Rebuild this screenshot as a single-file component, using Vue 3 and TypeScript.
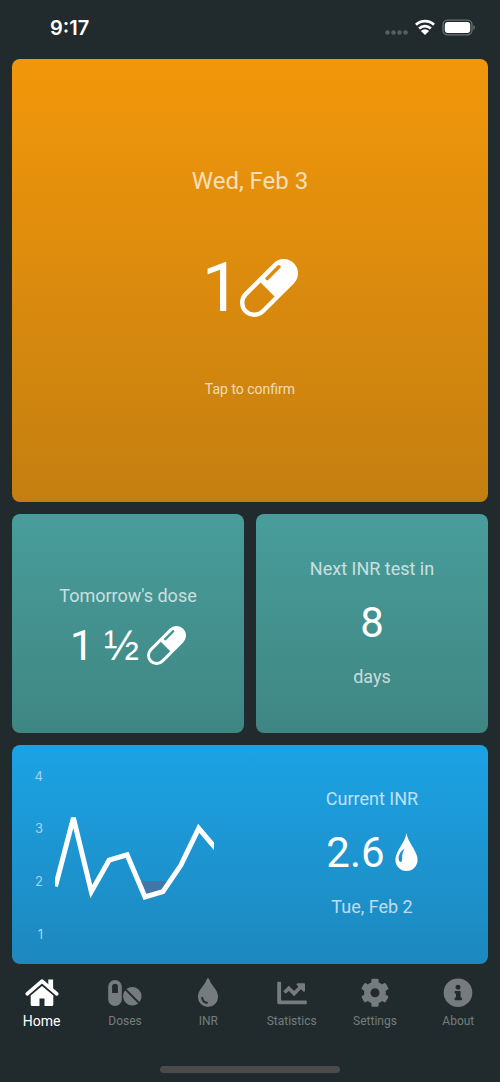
<script setup lang="ts">
import { computed, ref } from 'vue'

type TabId = 'home' | 'doses' | 'inr' | 'statistics' | 'settings' | 'about'

const tabs: { id: TabId; label: string }[] = [
  { id: 'home', label: 'Home' },
  { id: 'doses', label: 'Doses' },
  { id: 'inr', label: 'INR' },
  { id: 'statistics', label: 'Statistics' },
  { id: 'settings', label: 'Settings' },
  { id: 'about', label: 'About' },
]
const active = ref<TabId>('home')

const readings = [1.9, 3.2, 1.8, 2.4, 2.5, 1.7, 1.8, 2.3, 3.0, 2.6]
const levels = [4, 3, 2, 1]
const toX = (i: number) => 43.5 + i * 17.9
const toY = (v: number) => 241.5 - v * 52.7
const line = computed(() => readings.map((v, i) => `${toX(i)},${toY(v)}`).join(' '))
const area = computed(
  () => `${line.value} ${toX(readings.length - 1)},${toY(2)} ${toX(0)},${toY(2)}`,
)
</script>

<template>
  <div class="screen">
    <svg class="defs" aria-hidden="true">
      <symbol id="pill" viewBox="0 0 58 58">
        <g transform="translate(29 29) rotate(-45)">
          <path
            fill="currentColor"
            fill-rule="evenodd"
            d="M-20.8-14.3H20.8a14.3 14.3 0 0 1 0 28.6H-20.8a14.3 14.3 0 0 1 0-28.6ZM-20.8-9.9a9.9 9.9 0 0 0 0 19.8H-2V-9.9ZM5.5-9.8a1.8 1.8 0 0 0 0 3.6H22a1.8 1.8 0 0 0 0-3.6Z"
          />
        </g>
      </symbol>
    </svg>

    <header class="status">
      <time class="clock">9:17</time>
      <svg class="signals" width="90" height="20" viewBox="0 0 90 20" aria-hidden="true">
        <g fill="#565e60">
          <circle cx="2.5" cy="14.5" r="2.3" /><circle cx="8.5" cy="14.5" r="2.3" />
          <circle cx="14.5" cy="14.5" r="2.3" /><circle cx="20.5" cy="14.5" r="2.3" />
        </g>
        <g fill="none" stroke="#fff" stroke-width="2.8">
          <path d="M31 6.7a13 13 0 0 1 18 0" />
          <path d="M34.2 10.4a8.4 8.4 0 0 1 11.6 0" />
        </g>
        <path d="M35.9 12.9a5.8 5.8 0 0 1 8.2 0L40 17Z" fill="#fff" />
        <rect x="58" y="2.2" width="29" height="14.6" rx="4.5" fill="none" stroke="#697173" stroke-width="1.3" />
        <rect x="59.8" y="4" width="25.4" height="11" rx="3" fill="#fff" />
        <path d="M88.4 7q1.6.7 1.6 2.5t-1.6 2.5Z" fill="#697173" />
      </svg>
    </header>

    <main class="cards">
      <button class="card today" type="button">
        <span class="date">Wed, Feb 3</span>
        <span class="amount huge">1<svg class="pill-large" aria-hidden="true"><use href="#pill" /></svg></span>
        <span class="hint">Tap to confirm</span>
      </button>

      <button class="card teal short" type="button">
        <span class="caption">Tomorrow's dose</span>
        <span class="amount"><span>1 <span class="fraction">½</span></span><svg class="pill-small" aria-hidden="true"><use href="#pill" /></svg></span>
      </button>

      <button class="card teal" type="button">
        <span class="caption">Next INR test in</span>
        <span class="amount">8</span>
        <span class="caption">days</span>
      </button>

      <button class="card inr" type="button">
        <svg class="chart" viewBox="0 0 232 219" role="img" aria-label="INR history">
          <clipPath id="plot"><rect x="43" y="0" width="159" height="219" /></clipPath>
          <clipPath id="low"><rect x="43" :y="toY(2)" width="159" height="100" /></clipPath>
          <text v-for="n in levels" :key="n" x="31" :y="toY(n) + 5" text-anchor="end">{{ n }}</text>
          <polygon :points="area" fill="#4177a8" clip-path="url(#low)" />
          <polyline :points="line" fill="none" stroke="#fff" stroke-width="5" clip-path="url(#plot)" />
        </svg>
        <span class="current">
          <span class="caption">Current INR</span>
          <span class="amount reading">2.6
            <svg class="drop" viewBox="0 0 23 38" aria-hidden="true">
              <path
                fill="currentColor"
                fill-rule="evenodd"
                d="M11.5 0C12.3 9 22.6 18 22.6 26.8A11.1 11.1 0 0 1 .4 26.8C.4 18 10.7 9 11.5 0ZM9.6 15.4C6 17.6 3.6 21.5 3.6 25.3 3.6 27.3 4.4 29 5.7 29 7.8 29 6.8 25 7.4 21.6 7.8 19.2 8.6 17.4 9.6 15.4Z"
              />
            </svg>
          </span>
          <span class="caption">Tue, Feb 2</span>
        </span>
      </button>
    </main>

    <nav class="tabs" aria-label="Main">
      <button
        v-for="tab in tabs"
        :key="tab.id"
        type="button"
        class="tab"
        :class="{ active: active === tab.id }"
        :aria-current="active === tab.id ? 'page' : undefined"
        @click="active = tab.id"
      >
        <svg class="icon" viewBox="0 0 36 30" fill="currentColor" aria-hidden="true">
          <template v-if="tab.id === 'home'">
            <path d="M3.2 15.8 18 3.2 32.8 15.8" fill="none" stroke="currentColor" stroke-width="3.6" stroke-linecap="round" stroke-linejoin="round" />
            <path d="M24.3 1.4h4.8v11l-4.8-4Z" />
            <path d="M18 7.9 29.3 17.4V26.5a1.5 1.5 0 0 1-1.5 1.5H20.5V20.5H15.5V28H8.2A1.5 1.5 0 0 1 6.7 26.5V17.4Z" />
          </template>
          <template v-else-if="tab.id === 'doses'">
            <path fill-rule="evenodd" d="M8 2a6.8 6.8 0 0 1 6.8 6.8v12.4a6.8 6.8 0 0 1-13.6 0V8.800A6.8 6.8 0 0 1 8 2ZM8 5.8a2.9 2.9 0 0 0-2.9 2.9V15h5.8V8.7A2.9 2.9 0 0 0 8 5.8Z" />
            <path d="M19.4 11.02A9.3 9.3 0 0 1 32.48 24.1ZM18.12 12.3A9.3 9.3 0 0 0 31.2 25.38Z" />
          </template>
          <path
            v-else-if="tab.id === 'inr'"
            fill-rule="evenodd"
            d="M18 .2c.6 0 1 .3 1.2.9 2 7 8.9 10.6 8.9 17.7a10.1 10.1 0 0 1-20.2 0c0-7.1 6.9-10.7 8.9-17.7.2-.6.6-.9 1.2-.9ZM12.3 18.7a1 1 0 0 0-1 1c0 3.3 2.6 6 5.9 6a1 1 0 0 0 0-1.9c-2.2 0-4-1.9-4-4.1a1 1 0 0 0-.9-1Z"
          />
          <template v-else-if="tab.id === 'statistics'">
            <path d="M4.2 3.8h1.9a1 1 0 0 1 1 1v17.6h24.7a1 1 0 0 1 1 1v1.9a1 1 0 0 1-1 1H5a1.8 1.8 0 0 1-1.8-1.8V4.8a1 1 0 0 1 1-1Z" />
            <path d="m10.5 14.5 4.3-4.2 5.3 5.3 7-7" fill="none" stroke="currentColor" stroke-width="3.6" />
            <path d="M23.5 5.3h6.5a1 1 0 0 1 1 1V12.8c0 .9-1 1.3-1.7.7L22.8 7c-.6-.6-.2-1.7.7-1.7Z" />
          </template>
          <g v-else-if="tab.id === 'settings'" transform="translate(3.5 .2) scale(.0566)">
            <path d="M487.4 315.7l-42.6-24.6c4.3-23.2 4.3-47 0-70.2l42.6-24.6c4.9-2.8 7.1-8.6 5.5-14-11.1-35.6-30-67.8-54.7-94.6-3.8-4.1-10-5.1-14.8-2.3L380.8 110c-17.9-15.4-38.5-27.3-60.8-35.1V25.8c0-5.6-3.9-10.5-9.4-11.7-36.7-8.2-74.3-7.8-109.2 0-5.5 1.2-9.4 6.1-9.4 11.7V75c-22.2 7.9-42.8 19.8-60.8 35.1L88.7 85.5c-4.9-2.8-11-1.9-14.8 2.3-24.7 26.7-43.6 58.9-54.7 94.6-1.7 5.4.6 11.2 5.5 14L67.3 221c-4.3 23.2-4.3 47 0 70.2l-42.6 24.6c-4.9 2.8-7.1 8.6-5.5 14 11.1 35.6 30 67.8 54.7 94.6 3.8 4.1 10 5.1 14.8 2.3l42.6-24.6c17.9 15.4 38.5 27.3 60.8 35.1v49.2c0 5.6 3.9 10.5 9.4 11.7 36.7 8.2 74.3 7.8 109.2 0 5.5-1.2 9.4-6.1 9.4-11.7v-49.2c22.2-7.9 42.8-19.8 60.8-35.1l42.6 24.6c4.9 2.8 11 1.9 14.8-2.3 24.7-26.7 43.6-58.9 54.7-94.6 1.5-5.5-.7-11.3-5.6-14.1zM256 336c-44.1 0-80-35.9-80-80s35.9-80 80-80 80 35.9 80 80-35.9 80-80 80z" />
          </g>
          <path
            v-else
            fill-rule="evenodd"
            d="M18 .4a14.3 14.3 0 1 0 0 28.6 14.3 14.3 0 0 0 0-28.6ZM18 6.7a2.5 2.5 0 1 1 0 5 2.5 2.5 0 0 1 0-5ZM15.4 13h4.5q.7 0 .7.7v5.9h.7q.7 0 .7.7v1.3q0 .7-.7.7h-6q-.7 0-.7-.7v-1.3q0-.7.7-.7h.7v-3.9h-.7q-.7 0-.7-.7V13.7q0-.7.7-.7Z"
          />
        </svg>
        <span>{{ tab.label }}</span>
      </button>
    </nav>
    <div class="home-bar"></div>
  </div>
</template>

<style>
body {
  background: #212b2d;
}
</style>

<style scoped>
.screen {
  box-sizing: border-box;
  display: flex;
  flex-direction: column;
  min-height: 100vh;
  background: #212b2d;
  color: #fff;
  font-family: Roboto, sans-serif;
}
.defs {
  display: none;
}
.status {
  box-sizing: border-box;
  display: flex;
  align-items: center;
  justify-content: space-between;
  height: 59px;
  padding: 0 25px 4px 50px;
}
.clock {
  font: 600 20px/24px Inter, sans-serif;
}
.cards {
  flex: 1;
  display: grid;
  grid-template-columns: 1fr 1fr;
  grid-template-rows: 443fr 219fr 219fr;
  gap: 12px;
  padding: 0 12px;
}
.card {
  display: flex;
  flex-direction: column;
  align-items: center;
  justify-content: center;
  gap: 22px;
  min-width: 0;
  margin: 0;
  padding: 0;
  border: 0;
  border-radius: 8px;
  color: inherit;
  font: inherit;
  cursor: pointer;
}
.today {
  grid-column: 1 / -1;
  gap: 49px;
  padding-top: 2px;
  background: linear-gradient(#f2970b, #c47f10);
}
.teal {
  padding-bottom: 2px;
  background: linear-gradient(#489d9b, #3f8683);
}
.short {
  gap: 18px;
}
.inr {
  grid-column: 1 / -1;
  display: grid;
  grid-template-columns: 1fr 1fr;
  gap: 12px;
  background: linear-gradient(#1ca2e4, #1d88be);
}
.current {
  display: flex;
  flex-direction: column;
  align-items: center;
  gap: 22px;
  padding-bottom: 4px;
}
.chart {
  display: block;
  width: 100%;
}
.chart text {
  fill: #a4d4ef;
  font: 13px Inter, sans-serif;
}
.date {
  font-size: 24px;
  line-height: 36px;
  opacity: 0.7;
}
.hint {
  font-size: 14px;
  line-height: 24px;
  opacity: 0.7;
}
.caption {
  font-size: 18px;
  line-height: 28px;
  opacity: 0.7;
}
.amount {
  display: flex;
  align-items: center;
  gap: 8px;
  font-size: 42px;
  line-height: 36px;
}
.fraction {
  font-family: "Liberation Sans", sans-serif;
}
.huge {
  gap: 0;
  font-size: 68px;
  line-height: 80px;
}
.reading {
  gap: 10px;
}
.pill-large {
  width: 58px;
  height: 58px;
}
.pill-small {
  width: 39px;
  height: 39px;
  margin: -2px 0;
}
.drop {
  width: 23px;
  height: 38px;
  margin: -2px 0 0;
}
.tabs {
  display: grid;
  grid-template-columns: repeat(6, 1fr);
  padding-top: 14px;
}
.tab {
  display: flex;
  flex-direction: column;
  align-items: center;
  gap: 3px;
  min-width: 0;
  padding: 0;
  border: 0;
  background: none;
  color: #767c7e;
  font: 12px/20px Roboto, sans-serif;
  cursor: pointer;
}
.active {
  color: #fff;
  font-size: 14px;
}
.icon {
  width: 36px;
  height: 30px;
}
.home-bar {
  width: 36%;
  height: 7px;
  margin: 35px auto 9px;
  border-radius: 4px;
  background: #4b4b4b;
}
</style>
